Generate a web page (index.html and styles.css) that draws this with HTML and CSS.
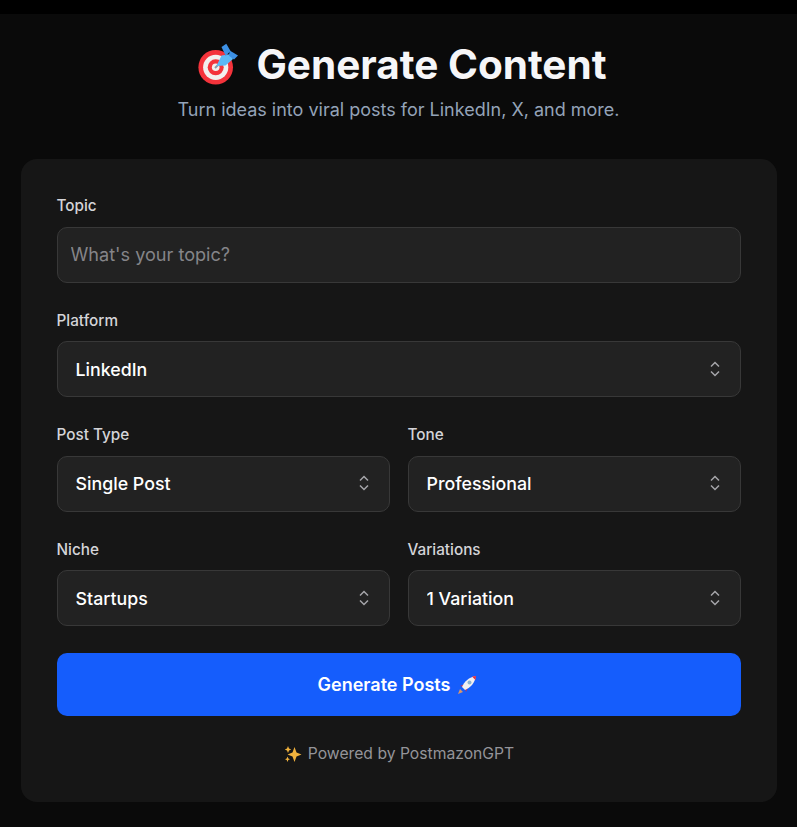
FILE: index.html
```html
<!DOCTYPE html>
<html lang="en">
<head>
<meta charset="utf-8">
<title>Generate Content</title>
<link rel="stylesheet" href="styles.css">
</head>
<body>

<div class="top-bar"></div>

<main class="page">
  <header class="page-head">
    <h1 class="page-title">
      <svg class="title-icon" viewBox="0 0 44 44">
        <circle cx="19.7" cy="24.3" r="17.3" fill="#f4333b"/>
        <circle cx="19.7" cy="24.3" r="12.6" fill="#f2f0ee"/>
        <circle cx="19.7" cy="24.3" r="8" fill="#f4333b"/>
        <circle cx="19.7" cy="24.3" r="3.8" fill="#f2f0ee"/>
        <path d="M19 25 L25 19" stroke="#8c9aa6" stroke-width="2"/>
        <path d="M20.5 23 L25.5 12.5 L35 11 L37 16 L29.5 22.5 Z" fill="#5db8f6"/>
        <path d="M25.5 4 L30.3 .8 L34.5 8 L29.7 13 Z" fill="#3d91e6"/>
        <path d="M33.7 7.5 L42 12.5 L38 16.5 L33 12.7 Z" fill="#3d91e6"/>
      </svg>
      <span>Generate Content</span>
    </h1>
    <p class="page-sub">Turn ideas into viral posts for LinkedIn, X, and more.</p>
  </header>

  <form class="card">
    <div class="field">
      <label class="field-label">Topic</label>
      <input class="text-input" type="text" placeholder="What's your topic?">
    </div>

    <div class="field">
      <label class="field-label">Platform</label>
      <div class="select-wrap">
        <select class="select-input"><option>LinkedIn</option></select>
        <svg class="chevrons" viewBox="0 0 12 18"><path d="M2 6.5 L6 2.5 L10 6.5 M2 11.5 L6 15.5 L10 11.5"/></svg>
      </div>
    </div>

    <div class="field-row">
      <div class="field">
        <label class="field-label">Post Type</label>
        <div class="select-wrap">
          <select class="select-input"><option>Single Post</option></select>
          <svg class="chevrons" viewBox="0 0 12 18"><path d="M2 6.5 L6 2.5 L10 6.5 M2 11.5 L6 15.5 L10 11.5"/></svg>
        </div>
      </div>
      <div class="field">
        <label class="field-label">Tone</label>
        <div class="select-wrap">
          <select class="select-input"><option>Professional</option></select>
          <svg class="chevrons" viewBox="0 0 12 18"><path d="M2 6.5 L6 2.5 L10 6.5 M2 11.5 L6 15.5 L10 11.5"/></svg>
        </div>
      </div>
    </div>

    <div class="field-row">
      <div class="field">
        <label class="field-label">Niche</label>
        <div class="select-wrap">
          <select class="select-input"><option>Startups</option></select>
          <svg class="chevrons" viewBox="0 0 12 18"><path d="M2 6.5 L6 2.5 L10 6.5 M2 11.5 L6 15.5 L10 11.5"/></svg>
        </div>
      </div>
      <div class="field">
        <label class="field-label">Variations</label>
        <div class="select-wrap">
          <select class="select-input"><option>1 Variation</option></select>
          <svg class="chevrons" viewBox="0 0 12 18"><path d="M2 6.5 L6 2.5 L10 6.5 M2 11.5 L6 15.5 L10 11.5"/></svg>
        </div>
      </div>
    </div>

    <button class="generate-btn" type="button">
      <span>Generate Posts</span>
      <svg class="btn-icon" viewBox="0 0 20 20">
        <path d="M1 19 L3 14 L6 17 Z" fill="#d9966b"/>
        <path d="M3 11 L8 9 L11 12 L9 17 L8 13 L7 12 Z" fill="#dd2e44"/>
        <path d="M5 12 C7 7 12 2 19 1 C18 8 13 13 8 15 Z" fill="#f1eff0"/>
        <path d="M15 1.6 C16.5 1.2 18 1 19 1 C19 2 18.8 3.5 18.4 5 Z" fill="#dd2e44"/>
        <circle cx="12.5" cy="7.5" r="2" fill="#8cb4d0"/>
      </svg>
    </button>

    <p class="powered">
      <svg class="powered-icon" viewBox="0 0 18 18">
        <path d="M10.5 2 L12.5 7.5 L17.5 9.5 L12.5 11.5 L10.5 17 L8.5 11.5 L3.5 9.5 L8.5 7.5 Z" fill="#f2b33d"/>
        <path d="M4 1 L5 3.5 L7.2 4.5 L5 5.5 L4 8 L3 5.5 L.8 4.5 L3 3.5 Z" fill="#f2b33d"/>
        <path d="M3.5 11.5 L4.3 13.4 L6 14.2 L4.3 15 L3.5 17 L2.7 15 L1 14.2 L2.7 13.4 Z" fill="#f2b33d"/>
      </svg>
      <span>Powered by PostmazonGPT</span>
    </p>
  </form>
</main>

</body>
</html>
```

FILE: styles.css
```css
:root {
  --bg: #0a0a0a;
  --card: #161616;
  --control: #222222;
  --line: #383838;
  --blue: #155dfc;
}

* {
  box-sizing: border-box;
}

body {
  margin: 0;
  background: var(--bg);
  color: #fff;
  font-family: Inter, "Liberation Sans", sans-serif;
}

.top-bar {
  height: 14px;
  background: #000;
}

.page {
  padding: 0 20.5px 25px;
}

.page-head {
  text-align: center;
  padding-top: 27px;
  margin-bottom: 36px;
}

.page-title {
  display: flex;
  justify-content: center;
  align-items: center;
  gap: 16px;
  margin: 0;
  padding-left: 6px;
  font-size: 40.5px;
  line-height: 48px;
  font-weight: 700;
  color: #f6f6f8;
}

.title-icon {
  width: 44px;
  height: 44px;
}

.page-sub {
  margin: 8px 0 0;
  font-size: 18px;
  line-height: 26px;
  color: #94a3b8;
}

.card {
  display: flex;
  flex-direction: column;
  gap: 27.8px;
  padding: 37.4px 36px 36.8px;
  background: var(--card);
  border-radius: 16px;
}

.field-row {
  display: grid;
  grid-template-columns: 1fr 1fr;
  gap: 18px;
}

.field-label {
  display: block;
  margin-bottom: 10.6px;
  font-size: 15.3px;
  line-height: 20px;
  font-weight: 500;
  color: #d4d4d8;
}

.text-input,
.select-input {
  display: block;
  width: 100%;
  height: 56px;
  background: var(--control);
  border: 1px solid var(--line);
  border-radius: 10px;
  color: #fff;
  font-family: inherit;
  font-size: 18px;
}

.text-input {
  padding: 0 13px 1px;
  font-size: 18.1px;
}

.text-input::placeholder {
  color: #858589;
  opacity: 1;
}

.select-wrap {
  position: relative;
}

.select-input {
  appearance: none;
  padding: 0 40px 0 18px;
  font-size: 17.8px;
  font-weight: 500;
}

.chevrons {
  position: absolute;
  right: 20px;
  top: 18.4px;
  width: 12px;
  height: 18px;
  fill: none;
  stroke: #a6a6aa;
  stroke-width: 1.5;
}

.generate-btn {
  display: flex;
  justify-content: center;
  align-items: center;
  gap: 7px;
  height: 63px;
  margin-top: -0.6px;
  padding: 0 2px 0 0;
  border: 0;
  border-radius: 10px;
  background: var(--blue);
  color: #fff;
  font-family: inherit;
  font-size: 18px;
  font-weight: 600;
}

.btn-icon {
  width: 20px;
  height: 20px;
}

.powered {
  display: flex;
  justify-content: center;
  align-items: center;
  gap: 6px;
  margin: -1px 0 0;
  padding-left: 1px;
  font-size: 15.7px;
  line-height: 22px;
  color: #949499;
}

.powered-icon {
  width: 18px;
  height: 18px;
}
```
